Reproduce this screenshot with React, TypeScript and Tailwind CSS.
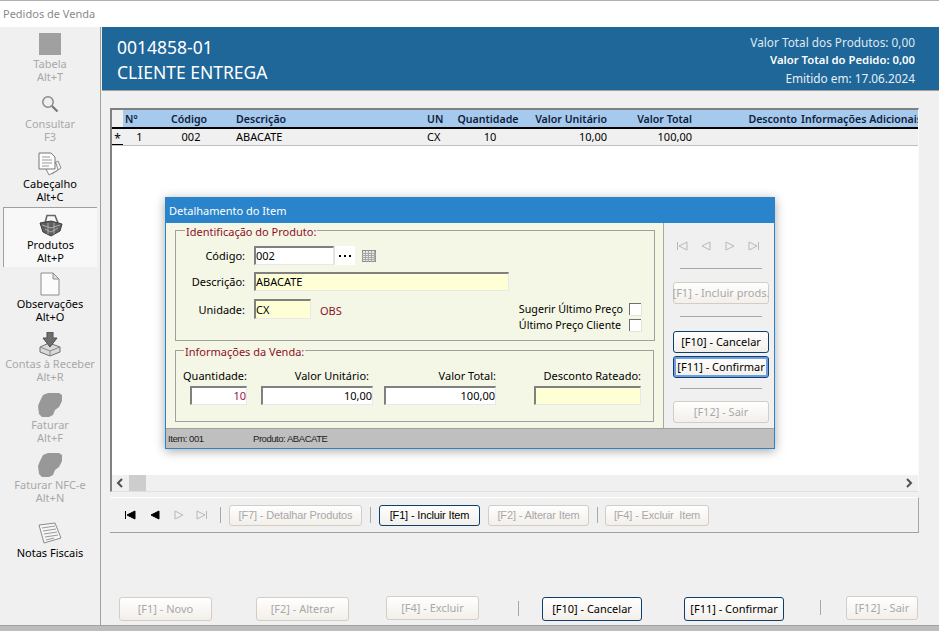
import type { ReactNode } from "react";

const FONT = "font-['Noto_Sans','Open_Sans',sans-serif]";

function BlobIcon() {
  return (
    <svg width="26" height="26" viewBox="0 0 26 26">
      <path d="M6 3 L11 1 L22 1 L25 3 L25 9 L22 15 L18 18 L16 23 L12 25 L5 25 L2 22 L1 14 L3 9 Z" fill="#989898" />
    </svg>
  );
}

function TableIcon() {
  return (
    <svg width="14" height="12" viewBox="0 0 14 12" shapeRendering="crispEdges">
      <rect x="0.5" y="0.5" width="13" height="11" fill="#e8e8e8" stroke="#8c8c8c" />
      <path d="M0 3.5H14M0 5.5H14M0 7.5H14M0 9.5H14M3.5 1V12M6.5 1V12M9.5 1V12M12 1V12" stroke="#a8a8a8" />
    </svg>
  );
}

function SearchIcon() {
  return (
    <svg width="18" height="18" viewBox="0 0 18 18" fill="none">
      <circle cx="7" cy="7" r="5.2" stroke="#8a8a8a" strokeWidth="1.5" />
      <path d="M11 11L16.5 16.5" stroke="#777" strokeWidth="2.2" />
    </svg>
  );
}

function PagesIcon() {
  return (
    <svg width="24" height="24" viewBox="0 0 24 24">
      <path d="M11 14L20 9L23 16L14 22Z" fill="#f4f4f4" stroke="#8a8a8a" />
      <path d="M8 17L18 11L20 18L11 23Z" fill="#fafafa" stroke="#8a8a8a" />
      <path d="M1 1H13L17 5V17H1Z" fill="#fcfcfc" stroke="#777" />
      <path d="M4 5H12M4 8H14M4 11H14M4 14H11" stroke="#999" />
    </svg>
  );
}

function BasketIcon() {
  return (
    <svg width="24" height="24" viewBox="0 0 24 24" fill="none">
      <path d="M6 10L8 2.5H16L19 10" stroke="#666" strokeWidth="1.6" />
      <path d="M1 10L12 8L23 11L21 18L12 23L4 19Z" fill="#5f5f5f" stroke="#3e3e3e" />
      <path d="M3 12L12 15L21 12M6 16L12 19L19 15M9 10V21M15 10V21" stroke="#b4b4b4" strokeWidth="0.9" />
    </svg>
  );
}

function DocIcon() {
  return (
    <svg width="20" height="24" viewBox="0 0 20 24">
      <path d="M1 1H13L19 7V23H1Z" fill="#fbfbfb" stroke="#8c8c8c" />
      <path d="M13 1V7H19Z" fill="#e2e2e2" stroke="#8c8c8c" />
    </svg>
  );
}

function PrinterIcon() {
  return (
    <svg width="22" height="25" viewBox="0 0 22 25">
      <path d="M1 15L10 11L21 15V20L11 24L1 20Z" fill="#d9d9d9" stroke="#707070" />
      <path d="M1 15L11 19L21 15M11 19V24" fill="none" stroke="#8a8a8a" />
      <path d="M8 0H14V6H18L11 15L4 6H8Z" fill="#6e6e6e" stroke="#4e4e4e" />
    </svg>
  );
}

function NoteIcon() {
  return (
    <svg width="24" height="22" viewBox="0 0 24 22">
      <path d="M1 3L17 1L23 16L6 21Z" fill="#f6f6f6" stroke="#8c8c8c" />
      <path d="M4 6L17 4M5 9L18 7M6 12L19 10M7 15L20 13M8 18L16 16" stroke="#9a9a9a" />
    </svg>
  );
}

function NavIcon({ kind, on = false, color = "#b8b8b8" }: { kind: "first" | "prev" | "next" | "last"; on?: boolean; color?: string }) {
  const fill = on ? "#000" : "none";
  const stroke = on ? "#000" : color;
  return (
    <svg width="12" height="10" viewBox="0 0 12 10" fill={fill} stroke={stroke}>
      {kind === "first" && <><path d="M1.5 1V9" fill="none" /><path d="M11 1V9L3 5Z" /></>}
      {kind === "prev" && <path d="M10 1V9L2 5Z" />}
      {kind === "next" && <path d="M2 1V9L10 5Z" />}
      {kind === "last" && <><path d="M10.5 1V9" fill="none" /><path d="M1 1V9L9 5Z" /></>}
    </svg>
  );
}

function SideItem({ icon, label, hint, off, active }: { icon: ReactNode; label: string; hint?: string; off?: boolean; active?: boolean }) {
  const text = off ? "text-[#a8a8a8]" : "text-black";
  return (
    <div className={`mx-[3px] flex h-[60.1px] flex-col items-center pt-[4px] text-center text-[11px] leading-[13px] ${text} ${active ? "border-t border-l border-[#a0a0a0] bg-[#f8f8f8]" : ""}`}>
      <div className="flex h-[26px] items-center justify-center">{icon}</div>
      <div className="whitespace-nowrap">{label}</div>
      {hint && <div className="whitespace-nowrap">{hint}</div>}
    </div>
  );
}

function Btn({ children, off, focus, className = "" }: { children: ReactNode; off?: boolean; focus?: boolean; className?: string }) {
  let tone = "border-[#0b3f70] text-black";
  if (off) tone = "border-[#d3cdc6] text-[#a8a8a8]";
  if (focus) tone = "border-[#0b3f70] text-black shadow-[inset_0_0_0_2px_#6f9fe0]";
  return (
    <div className={`flex items-center justify-center whitespace-nowrap rounded-[3px] border bg-gradient-to-b from-white to-[#f3efea] ${tone} ${className}`}>
      {children}
    </div>
  );
}

function Field({ value, yellow, right, className = "", tone = "text-black" }: { value?: string; yellow?: boolean; right?: boolean; className?: string; tone?: string }) {
  return (
    <div className={`flex items-center border-t-2 border-l-2 border-r border-b border-t-[#808080] border-l-[#808080] border-r-[#e8e8e8] border-b-[#e8e8e8] ${yellow ? "bg-[#ffffd6]" : "bg-white"} ${right ? "justify-end" : ""} ${tone} ${className}`}>
      {value}
    </div>
  );
}

function Rule({ className = "" }: { className?: string }) {
  return <div className={`h-px bg-[#a8a8a8] ${className}`} />;
}

function VRule({ className = "" }: { className?: string }) {
  return <div className={`w-px bg-[#a8a8a8] ${className}`} />;
}

function Check() {
  return <div className="h-[12px] w-[12px] border-t border-l border-[#707070] bg-white shadow-[1px_1px_0_#e4e4d8]" />;
}

function Dialog() {
  return (
    <div className="absolute left-[165px] top-[197px] flex h-[252px] w-[610px] flex-col border border-[#2a84cb] bg-[#f0f0f0] text-[11px] leading-[14px] shadow-[0_2px_10px_rgba(0,0,0,0.35)]">
      <div className="flex h-[25px] flex-none items-center bg-[#2a84cb] pl-[3px] text-white">Detalhamento do Item</div>
      <div className="flex h-[205px] flex-none">
        <div className="w-[497px] flex-none bg-[#f5f7e6] pl-[9px]">
          <fieldset className="h-[118px] w-[480px] border border-[#a0a0a0] pl-[9px]">
            <legend className="h-[14px] px-px leading-[18px] text-[#8c1028]">Identificação do Produto:</legend>
            <div className="ml-[-9px] mt-[9px] flex h-[19px] items-center">
              <div className="w-[69px] text-right">Código:</div>
              <div className="ml-[9px] flex h-[19px] w-[101px] bg-white">
                <Field value="002" className="w-[80px]" />
                <div className="flex flex-1 items-center justify-center gap-[3px] border-l border-[#e0e0e0]">
                  <div className="h-[2px] w-[2px] bg-black" />
                  <div className="h-[2px] w-[2px] bg-black" />
                  <div className="h-[2px] w-[2px] bg-black" />
                </div>
              </div>
              <div className="ml-[7px] flex"><TableIcon /></div>
            </div>
            <div className="ml-[-9px] mt-[7px] flex h-[19px] items-center">
              <div className="w-[69px] text-right">Descrição:</div>
              <Field value="ABACATE" yellow className="ml-[9px] h-[19px] w-[255px]" />
            </div>
            <div className="ml-[-9px] mt-[8px] flex h-[32px] items-start">
              <div className="mt-[4px] w-[69px] text-right">Unidade:</div>
              <Field value="CX" yellow className="ml-[9px] h-[20px] w-[57px]" />
              <div className="ml-[9px] mt-[5px] text-[#8c1028]">OBS</div>
              <div className="ml-auto mr-[13px] mt-[4px] flex flex-col gap-[4px] text-[10.7px]">
                <div className="flex h-[12px] items-center justify-between gap-[6px]"><span>Sugerir Último Preço</span><Check /></div>
                <div className="flex h-[12px] items-center justify-between gap-[6px]"><span>Último Preço Cliente</span><Check /></div>
              </div>
            </div>
          </fieldset>
          <fieldset className="mt-[2px] h-[79px] w-[479px] border border-[#a0a0a0] pl-[8px]">
            <legend className="h-[14px] px-px leading-[18px] text-[#8c1028]">Informações da Venda:</legend>
            <div className="ml-[-8px] mt-[12px] flex text-right">
              <div className="ml-[7px] w-[64px] whitespace-nowrap">Quantidade:</div>
              <div className="ml-[14px] w-[108px]">Valor Unitário:</div>
              <div className="ml-[11px] w-[116px]">Valor Total:</div>
              <div className="ml-[38px] w-[107px]">Desconto Rateado:</div>
            </div>
            <div className="ml-[-8px] mt-[3px] flex">
              <Field value="10" right tone="text-[#a01040]" className="ml-[14px] h-[19px] w-[57px]" />
              <Field value="10,00" right className="ml-[14px] h-[19px] w-[112px]" />
              <Field value="100,00" right className="ml-[11px] h-[19px] w-[112px]" />
              <Field yellow className="ml-[38px] h-[19px] w-[107px]" />
            </div>
          </fieldset>
        </div>
        <div className="flex flex-1 flex-col border-l border-[#a8a8a8] px-[9px]">
          <div className="ml-[3px] mt-[18px] flex h-[10px] w-[84px] items-center justify-between">
            <NavIcon kind="first" />
            <NavIcon kind="prev" />
            <NavIcon kind="next" />
            <NavIcon kind="last" />
          </div>
          <Rule className="mx-[7px] mt-[17px]" />
          <Btn off className="mt-[13px] h-[22px] w-[96px]">[F1] - Incluir prods.</Btn>
          <Rule className="mx-[7px] mt-[12px]" />
          <Btn className="mt-[14px] h-[22px] w-[96px]">[F10] - Cancelar</Btn>
          <Btn focus className="mt-[3px] h-[22px] w-[96px]">[F11] - Confirmar</Btn>
          <Rule className="mx-[7px] mt-[10px]" />
          <Btn off className="mt-[12px] h-[22px] w-[96px]">[F12] - Sair</Btn>
        </div>
      </div>
      <div className="flex flex-1 items-center border-t border-[#a0a0a0] bg-[#bfbfbf] pl-[2px] font-['Liberation_Sans',sans-serif] text-[9.5px] tracking-[-0.45px] text-[#222]">
        <span className="w-[85px]">Item: 001</span>
        <span>Produto: ABACATE</span>
      </div>
    </div>
  );
}

function ItemGrid() {
  return (
    <div className="ml-[8px] mt-[17px] flex h-[384px] w-[809px] flex-col border-t-2 border-l-2 border-r border-b border-t-[#808080] border-l-[#808080] border-r-[#fafafa] border-b-[#e0e0e0]">
      <div className="flex h-[19px] flex-none overflow-hidden border-b-2 border-black bg-[#a6c9ee] pt-px text-[10.6px] font-semibold leading-[16px] text-[#10203a]">
        <div className="-mt-px w-[11px] flex-none bg-[#f0f0f0]" />
        <div className="w-[33px] flex-none pl-[2px]">Nº</div>
        <div className="w-[66px] flex-none text-center">Código</div>
        <div className="w-[10px] flex-none" />
        <div className="w-[191px] flex-none pl-[4px]">Descrição</div>
        <div className="w-[30px] flex-none pl-[4px]">UN</div>
        <div className="w-[70px] flex-none text-center">Quantidade</div>
        <div className="w-[84px] flex-none text-right">Valor Unitário</div>
        <div className="w-[85px] flex-none text-right">Valor Total</div>
        <div className="w-[105px] flex-none text-right">Desconto</div>
        <div className="flex-none whitespace-nowrap pl-[4px]">Informações Adicionais</div>
      </div>
      <div className="flex h-[17px] flex-none items-center border-b border-[#c0c0c0] leading-[16px]">
        <div className="flex h-[16px] w-[11px] flex-none items-center justify-center border-b border-black bg-[#f0f0f0] pt-[4px] text-[12px]">*</div>
        <div className="w-[33px] flex-none text-center">1</div>
        <div className="w-[70px] flex-none text-center">002</div>
        <div className="w-[6px] flex-none" />
        <div className="w-[191px] flex-none pl-[4px]">ABACATE</div>
        <div className="w-[30px] flex-none pl-[4px]">CX</div>
        <div className="w-[74px] flex-none text-center">10</div>
        <div className="w-[80px] flex-none text-right">10,00</div>
        <div className="w-[85px] flex-none text-right">100,00</div>
      </div>
      <div className="flex-1 bg-white" />
      <div className="flex h-[16px] flex-none items-center bg-[#f0f0f0]">
        <svg className="ml-[4px]" width="8" height="10" viewBox="0 0 8 10" fill="none">
          <path d="M6 1L2 5L6 9" stroke="#505050" strokeWidth="2" />
        </svg>
        <div className="ml-[5px] h-[16px] w-[17px] bg-[#cdcdcd]" />
        <svg className="ml-auto mr-[5px]" width="8" height="10" viewBox="0 0 8 10" fill="none">
          <path d="M2 1L6 5L2 9" stroke="#505050" strokeWidth="2" />
        </svg>
      </div>
    </div>
  );
}

function ItemToolbar() {
  return (
    <div className="ml-[8px] mt-[5px] flex h-[36px] w-[809px] items-center border-t border-r border-b border-t-white border-r-[#a8a8a8] border-b-[#a0a0a0] pl-[14px] font-['Liberation_Sans',sans-serif] tracking-[-0.15px]">
      <div className="flex w-[96px] items-center">
        <NavIcon kind="first" on />
        <div className="ml-[13px]"><NavIcon kind="prev" on /></div>
        <div className="ml-[12px]"><NavIcon kind="next" /></div>
        <div className="ml-[11px]"><NavIcon kind="last" /></div>
      </div>
      <VRule className="h-[16px]" />
      <Btn off className="ml-[8px] h-[21px] w-[133px]">[F7] - Detalhar Produtos</Btn>
      <VRule className="ml-[8px] h-[16px]" />
      <Btn className="ml-[8px] h-[21px] w-[101px]">[F1] - Incluir Item</Btn>
      <Btn off className="ml-[8px] h-[21px] w-[101px]">[F2] - Alterar Item</Btn>
      <VRule className="ml-[8px] h-[16px]" />
      <Btn off className="ml-[7px] h-[21px] w-[104px]">[F4] - Excluir&nbsp; Item</Btn>
    </div>
  );
}

function BottomActions() {
  return (
    <div className="mt-auto flex h-[30px] items-start pl-[17px]">
      <Btn off className="mt-[2px] h-[24px] w-[93px]">[F1] - Novo</Btn>
      <Btn off className="ml-[44px] mt-[2px] h-[24px] w-[93px]">[F2] - Alterar</Btn>
      <Btn off className="ml-[37px] mt-[1px] h-[24px] w-[93px]">[F4] - Excluir</Btn>
      <VRule className="ml-[39px] mt-[6px] h-[15px]" />
      <Btn className="ml-[23px] mt-[2px] h-[24px] w-[100px]">[F10] - Cancelar</Btn>
      <Btn className="ml-[42px] mt-[2px] h-[24px] w-[100px]">[F11] - Confirmar</Btn>
      <VRule className="ml-[36px] mt-[5px] h-[15px]" />
      <Btn off className="ml-[25px] mt-[1px] h-[24px] w-[72px]">[F12] - Sair</Btn>
    </div>
  );
}

export default function App() {
  return (
    <div className={`relative flex h-[631px] w-[939px] flex-col overflow-hidden bg-[#f0f0f0] text-[11px] leading-[14px] text-black ${FONT}`}>
      <div className="flex h-[27px] flex-none items-center border-t border-[#b0b0b0] bg-white pl-[3px] text-[#8a8a8a]">Pedidos de Venda</div>
      <div className="flex h-[598px] flex-none">
        <div className="w-[101px] flex-none border-r border-[#a0a0a0]">
          <SideItem off label="Tabela" hint="Alt+T" icon={<div className="h-[22px] w-[22px] bg-[#a0a0a0]" />} />
          <SideItem off label="Consultar" hint="F3" icon={<SearchIcon />} />
          <SideItem label="Cabeçalho" hint="Alt+C" icon={<PagesIcon />} />
          <SideItem active label="Produtos" hint="Alt+P" icon={<BasketIcon />} />
          <SideItem label="Observações" hint="Alt+O" icon={<DocIcon />} />
          <SideItem off label="Contas à Receber" hint="Alt+R" icon={<PrinterIcon />} />
          <SideItem off label="Faturar" hint="Alt+F" icon={<BlobIcon />} />
          <SideItem off label="Faturar NFC-e" hint="Alt+N" icon={<BlobIcon />} />
          <div className="mt-[8px]">
            <SideItem label="Notas Fiscais" icon={<NoteIcon />} />
          </div>
        </div>
        <div className="ml-px flex flex-1 flex-col">
          <div className="flex h-[64px] flex-none justify-between border-b border-[#a0a0a0] bg-[#1f6699] text-white">
            <div className="pl-[15px] pt-[8px] text-[17.5px] leading-[25px]">
              <div>0014858-01</div>
              <div>CLIENTE ENTREGA</div>
            </div>
            <div className="pr-[24px] pt-[6px] text-right text-[11.8px] leading-[18px]">
              <div className="text-[#dfe9f2]">Valor Total dos Produtos: 0,00</div>
              <div className="text-[11.3px] font-semibold">Valor Total do Pedido: 0,00</div>
              <div className="text-[#e8eff5]">Emitido em: 17.06.2024</div>
            </div>
          </div>
          <ItemGrid />
          <ItemToolbar />
          <BottomActions />
        </div>
      </div>
      <div className="flex-1 border-t border-[#a0a0a0] bg-[#bdbdbd]" />
      <Dialog />
    </div>
  );
}
